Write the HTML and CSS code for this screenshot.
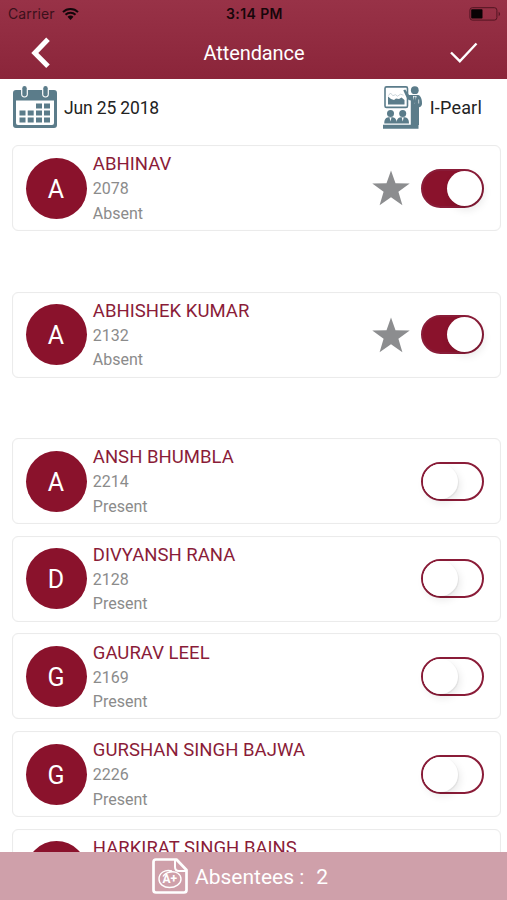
FILE: index.html
```html
<!DOCTYPE html>
<html lang="en">
<head>
<meta charset="utf-8">
<title>Attendance</title>
<link rel="stylesheet" href="styles.css">
</head>
<body>
<div class="screen">
  <header class="header">
    <div class="status">
      <div class="carrier"><span>Carrier</span>
        <svg class="wifi" viewBox="0 0 17 12" width="17" height="12"><path d="M1 4.1C5 0 12 0 16 4.1M3.5 6.8c2.7-2.7 7.3-2.7 10 0" fill="none" stroke="currentColor" stroke-width="2"/><path d="M5.5 8.8c1.7-1.7 4.3-1.7 6 0L8.5 12z" fill="currentColor"/></svg>
      </div>
      <div class="time">3:14 PM</div>
      <svg class="battery" viewBox="0 0 32 14" width="32" height="14"><rect x=".9" y=".7" width="27" height="12.4" rx="2.5" fill="none" stroke="#521421"/><rect x="2.2" y="2.3" width="11.3" height="9.2" rx=".8" fill="#080204"/><path d="M29.7 4.7c1.8.8 1.8 3.7 0 4.5z" fill="#521421"/></svg>
    </div>
    <nav class="nav">
      <svg viewBox="0 0 20 32" width="20" height="32"><path d="M18 2.3 4.800 16 18 29.3" fill="none" stroke="#fff" stroke-width="5"/></svg>
      <h1>Attendance</h1>
      <svg viewBox="0 0 28 22" width="28" height="22"><path d="m1 10.5 8.800 8.700L26.500 1.500" fill="none" stroke="#fff" stroke-width="2.400"/></svg>
    </nav>
  </header>

  <section class="info">
    <div class="date">
      <svg viewBox="0 0 44 43" width="44" height="43" fill="#5b7c8a"><path fill-rule="evenodd" d="M3 4h38q3 0 3 3v32q0 3-3 3H3q-3 0-3-3V7q0-3 3-3zM3 14.500V37q0 2 2 2h34q2 0 2-2V14.500z"/><rect x="8.100" y="-1" width="6.800" height="12.500" rx="3.400" fill="#fff"/><rect x="29.100" y="-1" width="6.800" height="12.500" rx="3.400" fill="#fff"/><rect x="9.300" y="0" width="4.400" height="10.500" rx="2.200"/><rect x="30.300" y="0" width="4.400" height="10.500" rx="2.200"/><path d="M23 17.500h6v5h-6zm8 0h6v5h-6zM6.500 24.500h6v5h-6zm8.200 0h6v5h-6zm8.300 0h6v5h-6zm8 0h6v5h-6zM6.500 31.500h6v5h-6zm8.200 0h6v5h-6zm8.300 0h6v5h-6zm8 0h6v5h-6z"/></svg>
      <span>Jun 25 2018</span>
    </div>
    <div class="class-name">
      <svg viewBox="0 0 40 43" width="40" height="43" fill="#5b7c8a"><rect x="2" y=".9" width="22.500" height="20.500" rx="1.500" fill="none" stroke="#5b7c8a" stroke-width="1.600"/><path d="M5 10.500 8 13 11 14l2-1.500 3 .5 2.500-1.500 3 2.500V18.500H5z"/><path d="m5.500 9.500 2-2.500 2.300 2.700 2.700-1 2 1.500 3-2 3 1" fill="none" stroke="#a9bac2" stroke-width=".6"/><circle cx="31.800" cy="4.200" r="3.900"/><path d="m20.300 4.200 2-.7 3.700 5.500h9c3 .5 4.300 5 4 9-.2 2-1.500 3-3 3.300V39h-8.200V14.500c-3-.3-4-2-7.500-10.300z"/><path d="m30 10 1.800 8 1.800-8z" fill="#fff"/><path d="M31.200 10.500h1.200l.8 5.500-1.300 1.500-1.300-1.500z"/><path d="M35.700 13.500v4" stroke="#fff" stroke-width=".7"/><circle cx="7.500" cy="27.500" r="3.500"/><circle cx="19.700" cy="27.500" r="3.500"/><path d="M1.300 37.500c0-4.500 1.500-5.800 4.200-6.300h4c2.700.5 4.200 1.800 4.200 6.300zm12.300 0c0-4.500 1.500-5.800 4.200-6.300h4c2.700.5 4.200 1.800 4.200 6.300zM0 38.700h35.500v4H0z"/><path d="m6.500 31.500 1 4 1-4zm12.200 0 1 4 1-4z" fill="#fff"/></svg>
      <span>I-Pearl</span>
    </div>
  </section>

  <main class="list">
    <article class="card absent"><div class="avatar">A</div><div class="student"><h2>ABHINAV</h2><p>2078</p><p>Absent</p></div><svg class="star" viewBox="0 0 38 36" width="38" height="36"><path d="m19 .5 4.500 12.800 14.200.2-11.300 8.200 4 13.600L19 27.200 7.600 35.300l4-13.600L.3 13.500l14.200-.2z"/></svg><div class="toggle on"></div></article>
    <article class="card absent"><div class="avatar">A</div><div class="student"><h2>ABHISHEK KUMAR</h2><p>2132</p><p>Absent</p></div><svg class="star" viewBox="0 0 38 36" width="38" height="36"><path d="m19 .5 4.500 12.800 14.200.2-11.300 8.200 4 13.600L19 27.200 7.600 35.300l4-13.600L.3 13.500l14.200-.2z"/></svg><div class="toggle on"></div></article>
    <article class="card"><div class="avatar">A</div><div class="student"><h2>ANSH BHUMBLA</h2><p>2214</p><p>Present</p></div><div class="toggle"></div></article>
    <article class="card"><div class="avatar">D</div><div class="student"><h2>DIVYANSH RANA</h2><p>2128</p><p>Present</p></div><div class="toggle"></div></article>
    <article class="card"><div class="avatar">G</div><div class="student"><h2>GAURAV LEEL</h2><p>2169</p><p>Present</p></div><div class="toggle"></div></article>
    <article class="card"><div class="avatar">G</div><div class="student"><h2>GURSHAN SINGH BAJWA</h2><p>2226</p><p>Present</p></div><div class="toggle"></div></article>
    <article class="card"><div class="avatar"></div><div class="student"><h2>HARKIRAT SINGH BAINS</h2></div></article>
  </main>

  <footer class="footer">
    <svg viewBox="0 0 36 36" width="36" height="36" fill="none" stroke="#fff" stroke-linejoin="round"><path d="M4 1.500h20.500L34.500 12v20q0 2.500-2.500 2.500H4Q1.500 34.500 1.500 32V4Q1.500 1.500 4 1.500z" stroke-width="2.700"/><path d="M23 2v7q0 4 4 4h7" stroke-width="2"/><path d="M20 13c-7-2-13 2-13 8 0 5 4.500 8.500 10.500 8.500S29 26 29 21c0-5-5-8-10.500-7-4 .7-6.500 2.500-7.500 4.500" stroke-width="1.400"/><text x="10.500" y="25" class="grade">A+</text></svg>
    <span class="label">Absentees :</span><span class="count">2</span>
  </footer>
</div>
</body>
</html>
```
FILE: styles.css
```css
* { box-sizing: border-box; }
body { margin: 0; background: #fff; font-family: Roboto, "Liberation Sans", sans-serif; }
h1, h2, p { margin: 0; font-weight: 400; }
svg { display: block; flex: none; }
.screen { height: 900px; overflow: hidden; display: flex; flex-direction: column; }

.header { height: 79px; flex: none; background: linear-gradient(#983247, #8b253a); border-bottom: 1px solid #8b253a; }
.status { height: 27px; padding: 0 6px 0 8px; display: grid; grid-template-columns: 1fr auto 1fr; align-items: center; color: #17060a; font: 14px/27px Inter, sans-serif; }
.carrier { display: flex; align-items: center; gap: 7px; letter-spacing: .1px; color: #3b101b; }
.wifi { color: #12060a; }
.time { font-weight: 600; letter-spacing: .4px; }
.battery { justify-self: end; }
.nav { height: 51px; padding: 0 29px 0 30px; display: grid; grid-template-columns: 1fr auto 1fr; align-items: center; }
.nav h1 { color: #fff; font-size: 20px; letter-spacing: -.1px; }
.nav svg:last-child { justify-self: end; }

.info { height: 66px; flex: none; padding: 6px 25px 0 13px; display: flex; justify-content: space-between; font-size: 17.500px; letter-spacing: -.15px; color: #222; }
.date, .class-name { display: flex; height: 44px; align-items: center; gap: 7px; }
.date span { padding-top: 2px; }
.class-name { font-size: 18px; letter-spacing: .2px; }

.list { flex: 1; min-height: 0; overflow: hidden; padding: 0 6px 0 12px; }
.card { height: 86px; margin-bottom: 11.700px; padding: 0 16px 0 12.500px; display: flex; align-items: center; border: 1px solid #ebebeb; border-radius: 6px; box-shadow: inset 0 0 1px #eee; }
.card.absent { margin-bottom: 60.500px; }
.avatar { width: 61px; height: 61px; flex: none; border-radius: 50%; background: #8a122c; color: #fff; font-size: 25px; display: flex; align-items: center; justify-content: center; padding-top: 2px; }
.student { flex: 1; align-self: flex-start; padding: 6.300px 0 0 6.300px; }
.student h2 { color: #8a1c38; font-size: 18.500px; line-height: 25px; letter-spacing: .03px; white-space: nowrap; }
.student p { color: #8b8b8b; font-size: 16px; line-height: 24.500px; }
.star { fill: #8c8d8f; margin-right: 11px; }
.toggle { width: 63px; height: 39px; flex: none; border: 2px solid #8a1c38; border-radius: 20px; display: flex; background: #fff; }
.toggle::before { content: ""; width: 35px; height: 35px; border-radius: 50%; background: #fff; box-shadow: 2px 4px 8px rgba(0, 0, 0, .09), 1px 1px 1px rgba(0, 0, 0, .06); }
.toggle.on { background: #8a122c; justify-content: flex-end; }

.footer { height: 48px; flex: none; background: #cfa0aa; color: #fff; display: flex; align-items: center; padding-left: 152px; font-size: 21px; }
.label { margin-left: 7px; padding-top: 2px; }
.count { margin-left: 12px; padding-top: 2px; }
.grade { font: 700 12px Roboto, sans-serif; fill: #fff; stroke: none; }
```
